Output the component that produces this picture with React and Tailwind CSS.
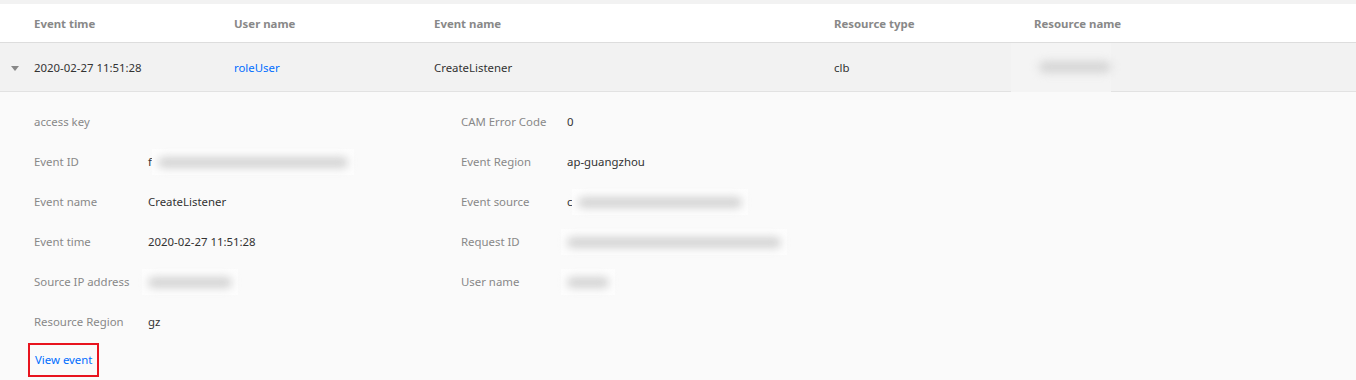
import React from 'react';

const font = { fontFamily: '"Noto Sans", "Liberation Sans", sans-serif' };

function Blur({ w, className = '' }) {
  return (
    <span className={`inline-flex items-center h-[26px] px-[6px] bg-[#fdfdfd] ${className}`}>
      <span className="block h-[11px] rounded-full bg-[#d3d3d3] blur-[4px]" style={{ width: w }} />
    </span>
  );
}

const leftRows = [
  { label: 'access key', value: '' },
  { label: 'Event ID', value: <span className="flex items-center">f<Blur w={190} /></span> },
  { label: 'Event name', value: 'CreateListener' },
  { label: 'Event time', value: '2020-02-27 11:51:28' },
  { label: 'Source IP address', value: <Blur w={84} className="-ml-[6px]" /> },
  { label: 'Resource Region', value: 'gz' },
];

const rightRows = [
  { label: 'CAM Error Code', value: '0' },
  { label: 'Event Region', value: 'ap-guangzhou' },
  { label: 'Event source', value: <span className="flex items-center">c<Blur w={164} /></span> },
  { label: 'Request ID', value: <Blur w={214} className="-ml-[6px]" /> },
  { label: 'User name', value: <Blur w={42} className="-ml-[6px]" /> },
];

function DetailRow({ label, value, labelW }) {
  return (
    <div className="flex items-center h-[40px]">
      <div className={`${labelW} text-[#888]`}>{label}</div>
      <div className="text-[#333]">{value}</div>
    </div>
  );
}

export default function App() {
  return (
    <div className="w-[1356px] h-[380px] bg-[#fafafa] text-[11.4px] overflow-hidden" style={font}>
      <div className="h-[4px] bg-[#f2f2f2]" />
      {/* header */}
      <div className="flex items-center h-[39px] pt-[2px] bg-white border-b border-[#dddddd] font-bold text-[#888]">
        <div className="w-[34px]" />
        <div className="w-[200px]">Event time</div>
        <div className="w-[200px]">User name</div>
        <div className="w-[400px]">Event name</div>
        <div className="w-[200px]">Resource type</div>
        <div>Resource name</div>
      </div>
      {/* row */}
      <div className="flex items-center h-[49px] pt-[2px] bg-[#f2f2f2] border-b border-[#e2e2e2] text-[#333]">
        <div className="w-[34px] flex justify-center pr-[4px]">
          <svg width="8" height="5" viewBox="0 0 8 5"><path d="M0 0h8L4 5z" fill="#888" /></svg>
        </div>
        <div className="w-[200px]">2020-02-27 11:51:28</div>
        <div className="w-[200px] text-[#006eff]">roleUser</div>
        <div className="w-[400px]">CreateListener</div>
        <div className="w-[200px]">clb</div>
        <div className="-ml-[23px] -mt-[2px] h-[49px] w-[100px] flex items-center bg-[#f4f4f4]">
          <span className="ml-[28px] block h-[12px] w-[72px] rounded-full bg-[#d6d6d6] blur-[4px]" />
        </div>
      </div>
      {/* detail */}
      <div className="pl-[34px] pt-[10px]">
        <div className="flex">
          <div className="w-[427px]">
            {leftRows.map(r => <DetailRow key={r.label} {...r} labelW="w-[114px]" />)}
          </div>
          <div>
            {rightRows.map(r => <DetailRow key={r.label} {...r} labelW="w-[106px]" />)}
          </div>
        </div>
        <div className="mt-[1px] -ml-[6px] inline-flex items-center h-[34px] px-[5px] border-2 border-[#e8141e]">
          <span className="text-[#006eff]">View event</span>
        </div>
      </div>
    </div>
  );
}
